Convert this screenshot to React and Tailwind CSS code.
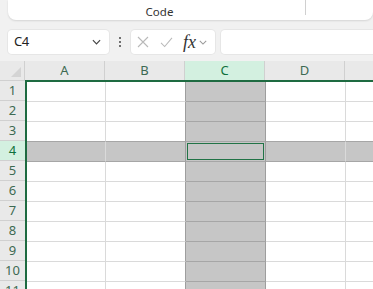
import React from 'react';

const cols = ['A', 'B', 'C', 'D', 'E'];
const rows = [1, 2, 3, 4, 5, 6, 7, 8, 9, 10, 11];

const Chevron = ({ className }) => (
  <svg viewBox="0 0 10 6" className={className} fill="none" stroke="currentColor" strokeWidth="1.3">
    <path d="M1 1l4 4 4-4" />
  </svg>
);

const FormulaBar = () => (
  <div className="flex items-center h-[24px] mt-[10px] pl-[8px]">
    <div className="w-[101px] h-full bg-white rounded-[4px] flex items-center justify-between pl-[6px] pr-[8px] shadow-[0_0_0_1px_#e6e6e6]">
      <span className="text-[13px] text-[#222] tracking-[-0.5px]">C4</span>
      <Chevron className="w-[9px] h-[6px] text-[#444]" />
    </div>
    <div className="w-[22px] flex flex-col items-center gap-[2px]">
      <span className="w-[2px] h-[2px] bg-[#444] rounded-full" />
      <span className="w-[2px] h-[2px] bg-[#444] rounded-full" />
      <span className="w-[2px] h-[2px] bg-[#444] rounded-full" />
    </div>
    <div className="w-[84px] h-full bg-white rounded-[4px] flex items-center pl-[6px] shadow-[0_0_0_1px_#e6e6e6]">
      <svg viewBox="0 0 12 12" className="w-[12px] h-[12px] text-[#b9b9b9]" fill="none" stroke="currentColor" strokeWidth="1.1">
        <path d="M1 1l10 10M11 1L1 11" />
      </svg>
      <svg viewBox="0 0 14 12" className="w-[13px] h-[11px] ml-[11px] text-[#b9b9b9]" fill="none" stroke="currentColor" strokeWidth="1.1">
        <path d="M1 6.5l4 4L13 1" />
      </svg>
      <span className="ml-[10px] text-[18px] italic text-[#333] leading-none" style={{ fontFamily: '"Liberation Serif", serif' }}>fx</span>
      <Chevron className="w-[8px] h-[5px] ml-[3px] text-[#999]" />
    </div>
    <div className="flex-1 h-full bg-white rounded-l-[4px] ml-[6px] shadow-[0_0_0_1px_#e6e6e6]" />
  </div>
);

const Cell = ({ col, row }) => {
  const isC = col === 'C';
  const isRow4 = row === 4;
  const filled = isC || isRow4;
  const rightDark = col === 'B' || col === 'C';
  const bottomDark = isC || row === 3 || row === 4;
  return (
    <div
      className={`${col === 'A' ? 'w-[79px]' : 'w-[80px]'} h-full shrink-0 border-r border-b ${
        filled ? 'bg-[#c6c6c6]' : 'bg-white'
      } ${rightDark ? 'border-r-[#9e9e9e]' : 'border-r-[#dadada]'} ${
        bottomDark ? 'border-b-[#a6a6a6]' : 'border-b-[#dadada]'
      } flex`}
    >
      {isC && isRow4 && <div className="m-[1px] flex-1 border border-[#217346]" />}
    </div>
  );
};

export default function App() {
  return (
    <div
      className="w-[373px] h-[289px] bg-[#f1f1f1] overflow-hidden"
      style={{ fontFamily: '"Noto Sans", "Open Sans", sans-serif' }}
    >
      <div className="ml-[8px] h-[20px] bg-white rounded-b-[8px] shadow-[0_1px_2px_rgba(0,0,0,0.12)] flex">
        <div className="ml-[6px] w-[292px] h-[15px] border-r border-[#d0d0d0] flex items-end justify-center">
          <span className="text-[11.5px] text-[#333] leading-none mb-[-2px]">Code</span>
        </div>
      </div>

      <FormulaBar />

      <div className="mt-[7px] bg-[#e9e9e9]">
        <div className="flex h-[19px]">
          <div className="w-[25px] shrink-0 relative border-r border-[#d0d0d0]">
            <div className="absolute right-[3px] bottom-[3px] w-0 h-0 border-l-[10px] border-l-transparent border-b-[10px] border-b-[#d4d4d4]" />
          </div>
          {cols.map((c) => (
            <div
              key={c}
              className={`w-[80px] shrink-0 flex items-center justify-center border-r border-[#d0d0d0] text-[13px] ${
                c === 'C' ? 'bg-[#d3f0e0] text-[#0f703b]' : 'text-[#3d6a52]'
              }`}
            >
              {c === 'E' ? '' : c}
            </div>
          ))}
        </div>
        <div className="flex">
          <div className="w-[25px] shrink-0 border-t border-[#d0d0d0]">
            {rows.map((r) => (
              <div
                key={r}
                className={`h-[20px] flex items-center justify-center border-b border-[#d0d0d0] text-[13px] ${
                  r === 4 ? 'bg-[#d3f0e0] text-[#0f703b]' : 'text-[#3d6a52]'
                }`}
              >
                {r}
              </div>
            ))}
          </div>
          <div className="flex-1 border-l-2 border-t-2 border-[#1e6b41] bg-white">
            {rows.map((r) => (
              <div key={r} className="flex h-[20px]">
                {cols.map((c) => (
                  <Cell key={c} col={c} row={r} />
                ))}
              </div>
            ))}
          </div>
        </div>
      </div>
    </div>
  );
}
